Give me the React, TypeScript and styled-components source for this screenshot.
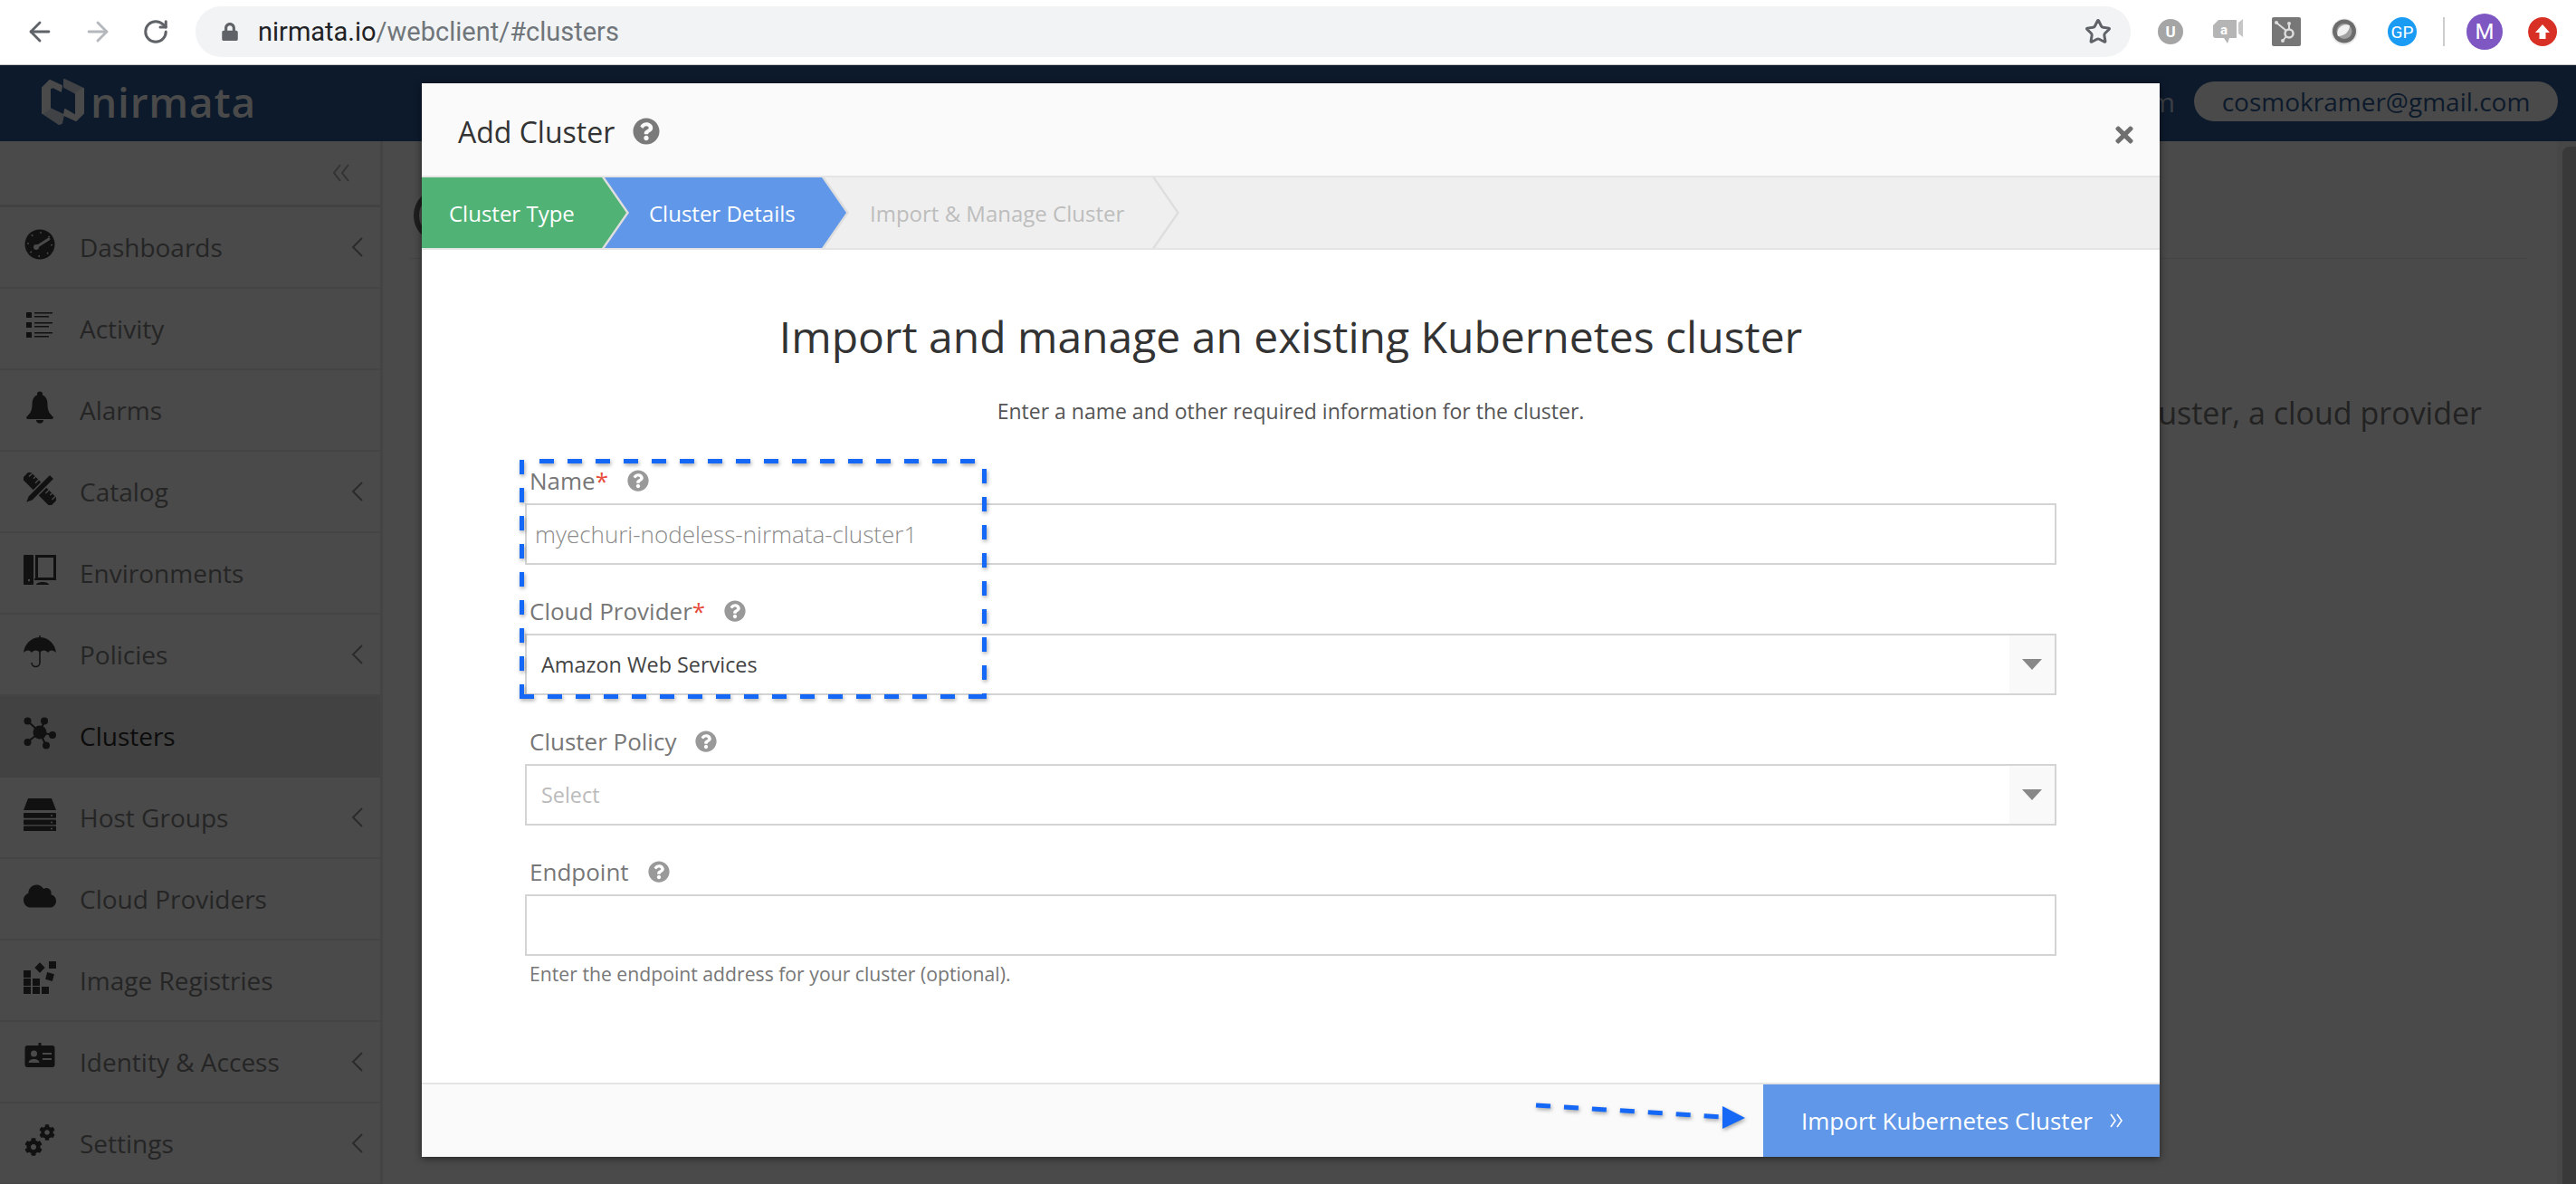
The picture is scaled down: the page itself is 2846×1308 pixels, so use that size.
import React from "react";
import styled, { createGlobalStyle } from "styled-components";
import { ArrowLeft, ArrowRight, RotateCw, Star } from "lucide-react";
import { FaCloud, FaCog, FaLock, FaQuestionCircle, FaTimes } from "react-icons/fa";

const GlobalStyle = createGlobalStyle`
  html, body { margin: 0; padding: 0; background: #4a4a4a; }
  * { box-sizing: border-box; }
`;

const INK = "#111111";
const DIM = "#4a4a4a";

const GaugeIcon = () => (
  <svg width="36" height="36" viewBox="0 0 36 36">
    <circle cx="18" cy="18" r="16.5" fill={INK} />
    <circle cx="18" cy="18" r="13" fill="none" stroke={DIM} strokeWidth="2" strokeDasharray="1.5 8.7" />
    <path d="M14 21 L28 12" stroke={DIM} strokeWidth="3" strokeLinecap="round" />
    <circle cx="14" cy="21" r="3" fill={DIM} />
  </svg>
);

const ListIcon = () => (
  <svg width="36" height="36" viewBox="0 0 36 36">
    {[3, 14, 25].map((y) => (
      <g key={y}>
        <rect x="3" y={y} width="6" height="6" fill={INK} />
        <rect x="12" y={y} width="20" height="1.5" fill={INK} />
        <rect x="12" y={y + 4} width="16" height="1.5" fill={INK} />
      </g>
    ))}
  </svg>
);

const BellIcon = () => (
  <svg width="36" height="36" viewBox="0 0 36 36" fill={INK}>
    <circle cx="18" cy="3.500" r="3" />
    <path d="M18 4 C11 4 9.500 10 9.500 15 C9.500 22 7 25 3 29 C3 30 4 31 5 31 H31 C32 31 33 30 33 29 C29 25 26.500 22 26.500 15 C26.500 10 25 4 18 4Z" />
    <path d="M14 32 H22 C22 37 14 37 14 32Z" />
  </svg>
);

const RulerPencilIcon = () => (
  <svg width="36" height="36" viewBox="0 0 36 36">
    <g transform="rotate(-45 18 18)">
      <rect x="12" y="-4" width="12" height="44" fill={INK} />
      <path d="M24 0 H19 M24 5 H21 M24 10 H19 M24 26 H19 M24 31 H21 M24 36 H19" stroke={DIM} strokeWidth="1.400" />
    </g>
    <path d="M29 2 L34 7 L10 31 L2 34 L5 26Z" fill={INK} stroke={DIM} strokeWidth="1.500" />
  </svg>
);

const DesktopIcon = () => (
  <svg width="36" height="36" viewBox="0 0 36 36">
    <rect x="0" y="1" width="11" height="33" rx="1" fill={INK} />
    <circle cx="6" cy="29" r="1.2" fill={DIM} />
    <rect x="14.5" y="2.5" width="20" height="25" fill="none" stroke={INK} strokeWidth="3" />
    <path d="M12 27 H36 V29 H12Z M14 34 C14 30 28 30 28 34Z" fill={INK} />
  </svg>
);

const UmbrellaIcon = () => (
  <svg width="36" height="36" viewBox="0 0 36 36">
    <path d="M17.3 0 H18.7 V2 C28 2.500 35 10 36 19 C33 15.500 29 15.500 27 19 C25 15.500 20 15.500 18 19 C16 15.500 11 15.500 9 19 C7 15.500 3 15.500 0 19 C1 10 8 2.500 17.300 2Z" fill={INK} />
    <path d="M18 18 V30 A4.500 4.500 0 0 1 9 30" fill="none" stroke={INK} strokeWidth="1.500" />
  </svg>
);

const ClusterIcon = () => (
  <svg width="36" height="36" viewBox="0 0 36 36">
    <path d="M18 17 L4 4 M18 17 L23 5 M18 17 L32 20 M18 17 L25 32 M18 17 L4 28" stroke={INK} strokeWidth="2" />
    <circle cx="18" cy="17" r="7.500" fill={INK} />
    <circle cx="4.500" cy="4.500" r="4" fill={INK} />
    <circle cx="23" cy="4.500" r="4" fill={INK} />
    <circle cx="32" cy="20" r="4" fill={INK} />
    <circle cx="25" cy="31.500" r="4" fill={INK} />
    <circle cx="4.500" cy="28" r="4" fill={INK} />
  </svg>
);

const ServerIcon = () => (
  <svg width="36" height="36" viewBox="0 0 36 36">
    <path d="M5 0 H31 L36 13 H0Z" fill={INK} />
    {[16, 23.500, 30.500].map((y) => (
      <g key={y}>
        <rect x="0" y={y} width="36" height="5.800" rx="1" fill={INK} />
        <circle cx="31" cy={y + 2.900} r="1" fill={DIM} />
      </g>
    ))}
  </svg>
);

const BlocksIcon = () => (
  <svg width="36" height="36" viewBox="0 0 36 36" fill={INK}>
    <rect x="0" y="28" width="8" height="8" />
    <rect x="10" y="28" width="8" height="8" />
    <rect x="20" y="28" width="8" height="8" />
    <rect x="0" y="19" width="8" height="8" />
    <rect x="10" y="19" width="8" height="8" />
    <rect x="0" y="10" width="8" height="8" />
    <rect x="14" y="3" width="8" height="8" transform="rotate(45 18 7)" />
    <rect x="25" y="13" width="8" height="8" transform="rotate(15 29 17)" />
    <rect x="28" y="0" width="8" height="8" />
  </svg>
);

const IdCardIcon = () => (
  <svg width="36" height="36" viewBox="0 0 36 36">
    <rect x="1.500" y="3" width="33" height="24" rx="3" fill={INK} />
    <rect x="16.500" y="0" width="3" height="4" fill={INK} />
    <circle cx="11.500" cy="12" r="3.500" fill={DIM} />
    <path d="M5.500 22 C6 16.500 17 16.500 17.500 22Z" fill={DIM} />
    <rect x="21" y="11" width="10" height="2" fill={DIM} />
    <rect x="21" y="17" width="10" height="2" fill={DIM} />
  </svg>
);

const GearsIcon = () => (
  <svg width="36" height="36" viewBox="0 0 36 36" color={INK}>
    <FaCog x="1" y="15" size={20} />
    <FaCog x="17" y="0" size={18} />
  </svg>
);

const BrandMark = () => (
  <svg width="47" height="51" viewBox="0 0 47 51" fill={DIM} stroke={DIM} strokeWidth="2" strokeLinejoin="round">
    <path d="M1 10 L9 2 L22 8 L21 14 L9 9 V33 L1 38Z" />
    <path d="M1 38 L9 33 L24 40 L22 49 L19 50Z" opacity="0.85" />
    <path d="M12 10 L22 15 L22 36 L12 31Z" fill="#0d1a2c" stroke="none" />
    <path d="M25 1 L46 11 L38 16 L25 9Z" opacity="0.85" />
    <path d="M38 16 L46 11 V38 L38 46 L25 40 L26 34 L38 41Z" />
  </svg>
);

const Page = styled.div`
  position: relative;
  width: 2846px;
  height: 1308px;
  overflow: hidden;
  background: #4a4a4a;
  font-family: "Open Sans", "Noto Sans", sans-serif;
`;

const Toolbar = styled.div`
  display: flex;
  align-items: center;
  height: 72px;
  padding: 0 0 1px 12px;
  background: #fff;
  border-bottom: 1px solid #c8c8c8;
`;

const NavButton = styled.div<{ $color: string }>`
  display: flex;
  align-items: center;
  justify-content: center;
  width: 64px;
  color: ${(p) => p.$color};
`;

const Omnibox = styled.div`
  display: flex;
  align-items: center;
  width: 2138px;
  height: 56px;
  margin: 0 12px;
  padding: 0 21px 0 28px;
  border-radius: 28px;
  background: #f1f3f4;
  color: #5f6368;
`;

const Url = styled.div`
  flex: 1;
  margin-left: 21px;
  font-family: Roboto, sans-serif;
  font-size: 29px;
  color: #70757a;
  span {
    color: #202124;
  }
`;

const ExtensionSlot = styled.div`
  display: flex;
  align-items: center;
  justify-content: center;
  width: 64px;
`;

const ToolbarDivider = styled.div`
  width: 2px;
  height: 32px;
  margin: 0 12px 0 13px;
  background: #ccc;
`;

const RoundBadge = styled.div<{ $size: number; $bg: string; $weight?: number }>`
  display: flex;
  align-items: center;
  justify-content: center;
  width: ${(p) => p.$size}px;
  height: ${(p) => p.$size}px;
  border-radius: 50%;
  background: ${(p) => p.$bg};
  color: #fff;
  font-family: Roboto, sans-serif;
  font-size: ${(p) => Math.round(p.$size * 0.6)}px;
  font-weight: ${(p) => p.$weight ?? 400};
`;

const TopNav = styled.div`
  display: flex;
  align-items: center;
  justify-content: space-between;
  height: 84px;
  padding: 0 20px 4px 46px;
  background: #0d1a2c;
`;

const Brand = styled.div`
  display: flex;
  align-items: center;
  gap: 7px;
  color: ${DIM};
  font-family: "Open Sans", sans-serif;
  font-size: 46px;
  font-weight: 600;
  letter-spacing: 0.8px;
  line-height: 50px;
`;

const AccountArea = styled.div`
  display: flex;
  align-items: center;
  gap: 21px;
  color: #3c3f45;
  font-size: 30px;
`;

const AccountPill = styled.div`
  display: flex;
  align-items: center;
  justify-content: center;
  width: 402px;
  height: 44px;
  border-radius: 22px;
  background: ${DIM};
  color: #0d1a2c;
  font-size: 28px;
`;

const Workspace = styled.div`
  display: flex;
  height: 1152px;
`;

const Sidebar = styled.div`
  flex: none;
  width: 423px;
  border-right: 3px solid #444;
`;

const CollapseRow = styled.div`
  display: flex;
  align-items: center;
  justify-content: flex-end;
  height: 73px;
  padding-right: 33px;
  border-bottom: 3px solid #424242;
  color: #333;
`;

const MenuRow = styled.div<{ $active?: boolean }>`
  display: flex;
  align-items: center;
  height: 90px;
  padding: 0 18px 0 26px;
  background: ${(p) => (p.$active ? "#424242" : "transparent")};
  border-bottom: 2px solid ${(p) => (p.$active ? "#424242" : "#444")};
  color: ${(p) => (p.$active ? "#0c0c0c" : "#252525")};
  font-size: 28px;
`;

const MenuIcon = styled.span`
  display: flex;
  align-items: center;
  justify-content: center;
  flex: none;
  width: 36px;
  height: 36px;
  margin: -6px 26px 0 0;
  color: ${INK};
`;

const MenuLabel = styled.span`
  flex: 1;
`;

const Content = styled.div`
  flex: 1;
  padding: 52px 33px 0 30px;
`;

const ContentHead = styled.div`
  height: 78px;
  border-bottom: 1px solid #444;
`;

const ContentBadge = styled.div`
  width: 60px;
  height: 60px;
  margin-left: 4px;
  border: 6px solid #1e1e1e;
  border-radius: 50%;
`;

const BackgroundCopy = styled.div`
  margin-top: 147px;
  padding-right: 50px;
  color: #222;
  font-size: 34px;
  line-height: 46px;
  text-align: right;
  white-space: nowrap;
`;

const ScrollTrack = styled.div`
  flex: none;
  width: 21px;
  padding: 6px 0 0 6px;
  background: #474747;
`;

const ScrollThumb = styled.div`
  height: 100%;
  border-radius: 8px 0 0 0;
  background: #393939;
`;

const Modal = styled.div`
  position: absolute;
  top: 92px;
  left: 466px;
  display: flex;
  flex-direction: column;
  width: 1920px;
  height: 1186px;
  border-radius: 3px 3px 0 0;
  background: #fff;
  box-shadow: 0 2px 8px rgba(0, 0, 0, 0.5);
`;

const ModalHeader = styled.div`
  display: flex;
  align-items: center;
  flex: none;
  height: 104px;
  padding: 4px 25px 0 40px;
  background: #fafafa;
  border-bottom: 2px solid #e4e4e4;
  color: #7a7a7a;
`;

const ModalTitle = styled.div`
  margin-right: 20px;
  color: #333;
  font-size: 32px;
`;

const CloseButton = styled.div`
  display: flex;
  margin: 8px 0 0 auto;
  color: #6f6f6f;
`;

const StepStrip = styled.div`
  display: flex;
  flex: none;
  height: 80px;
  background: #efefef;
  border-bottom: 2px solid #e4e4e4;
`;

const CHEVRON = "polygon(0 0, calc(100% - 27px) 0, 100% 50%, calc(100% - 27px) 100%, 0 100%)";

const Step = styled.div<{ $width: number; $overlap: number; $z: number }>`
  position: relative;
  z-index: ${(p) => p.$z};
  flex: none;
  width: ${(p) => p.$width}px;
  margin-left: ${(p) => -p.$overlap}px;
  background: #dedede;
  clip-path: ${CHEVRON};
`;

const StepFill = styled.div<{ $bg: string; $color: string; $pad: number }>`
  display: flex;
  align-items: center;
  height: 100%;
  margin-right: 3px;
  padding-left: ${(p) => p.$pad}px;
  background: ${(p) => p.$bg};
  color: ${(p) => p.$color};
  clip-path: ${CHEVRON};
  font-size: 24px;
`;

const ModalBody = styled.div`
  flex: 1;
  padding: 62px 114px 0;
`;

const Heading = styled.h1`
  margin: 0;
  color: #333;
  font-size: 48px;
  font-weight: 400;
  line-height: 68px;
  text-align: center;
`;

const Intro = styled.p`
  margin: 30px 0 41px;
  color: #555;
  font-size: 23px;
  line-height: 36px;
  text-align: center;
`;

const Form = styled.div`
  display: flex;
  flex-direction: column;
  gap: 33px;
`;

const FieldLabel = styled.div`
  display: flex;
  align-items: center;
  height: 36px;
  margin-bottom: 7px;
  padding-left: 5px;
  color: #777;
  font-size: 26px;
  svg {
    margin-left: 21px;
    color: #999;
  }
`;

const Required = styled.span`
  color: #e74c3c;
`;

const TextBox = styled.div`
  display: flex;
  align-items: center;
  height: 68px;
  padding-left: 9px;
  border: 2px solid #d4d4d4;
  color: #8a8a8a;
  font-size: 26px;
  font-weight: 300;
`;

const SelectBox = styled.div`
  display: flex;
  align-items: stretch;
  height: 68px;
  border: 2px solid #d4d4d4;
`;

const SelectValue = styled.div<{ $placeholder?: boolean }>`
  display: flex;
  align-items: center;
  flex: 1;
  padding-left: 16px;
  color: ${(p) => (p.$placeholder ? "#bbb" : "#444")};
  font-size: 23.4px;
`;

const SelectCaret = styled.div`
  display: flex;
  align-items: center;
  justify-content: center;
  width: 50px;
  background: #f9f9f9;
  &::after {
    content: "";
    border-top: 12px solid #888;
    border-left: 11px solid transparent;
    border-right: 11px solid transparent;
  }
`;

const Hint = styled.div`
  margin-top: 5px;
  padding-left: 5px;
  color: #777;
  font-size: 21.2px;
  line-height: 30px;
`;

const ModalFooter = styled.div`
  display: flex;
  justify-content: flex-end;
  flex: none;
  height: 82px;
  background: #fafafa;
  border-top: 2px solid #e4e4e4;
`;

const SubmitButton = styled.div`
  display: flex;
  align-items: center;
  gap: 18px;
  width: 438px;
  padding-left: 42px;
  background: #6097e8;
  color: #fff;
  font-size: 26px;
`;

const Annotation = styled.svg`
  position: absolute;
  top: 0;
  left: 0;
  pointer-events: none;
  filter: drop-shadow(1px 2px 2px rgba(0, 0, 0, 0.35));
`;

type MenuEntry = { label: string; icon: React.ReactNode; sub?: boolean; active?: boolean };

const MENU: MenuEntry[] = [
  { label: "Dashboards", icon: <GaugeIcon />, sub: true },
  { label: "Activity", icon: <ListIcon /> },
  { label: "Alarms", icon: <BellIcon /> },
  { label: "Catalog", icon: <RulerPencilIcon />, sub: true },
  { label: "Environments", icon: <DesktopIcon /> },
  { label: "Policies", icon: <UmbrellaIcon />, sub: true },
  { label: "Clusters", icon: <ClusterIcon />, active: true },
  { label: "Host Groups", icon: <ServerIcon />, sub: true },
  { label: "Cloud Providers", icon: <FaCloud size={36} /> },
  { label: "Image Registries", icon: <BlocksIcon /> },
  { label: "Identity & Access", icon: <IdCardIcon />, sub: true },
  { label: "Settings", icon: <GearsIcon />, sub: true },
];

const HELP_SIZE = 24;

export default function App() {
  return (
    <Page>
      <GlobalStyle />
      <Toolbar>
        <NavButton $color="#5f6368"><ArrowLeft size={34} strokeWidth={2} /></NavButton>
        <NavButton $color="#b4b7bb"><ArrowRight size={34} strokeWidth={2} /></NavButton>
        <NavButton $color="#5f6368"><RotateCw size={30} strokeWidth={2.4} /></NavButton>
        <Omnibox>
          <FaLock size={20} />
          <Url><span>nirmata.io</span>/webclient/#clusters</Url>
          <Star size={30} strokeWidth={2.4} />
        </Omnibox>
        <ExtensionSlot>
          <RoundBadge $size={28} $bg="#a5a5a5" $weight={700}>U</RoundBadge>
        </ExtensionSlot>
        <ExtensionSlot>
          <svg width="34" height="30" viewBox="0 0 34 30">
            <path d="M6 2 H26 V22 H18 L16 28 L12 22 H3 A3 3 0 0 1 0 19 V8Z" fill="#b5b5b5" />
            <path d="M28 5 L33 1 V21 L28 17Z" fill="#c6c6c6" />
            <text x="8" y="18" fill="#fff" fontFamily="Roboto, sans-serif" fontSize="15" fontWeight="700">a</text>
          </svg>
        </ExtensionSlot>
        <ExtensionSlot>
          <svg width="32" height="32" viewBox="0 0 32 32">
            <rect width="32" height="32" rx="2" fill="#777" />
            <circle cx="19" cy="18" r="4.500" fill="none" stroke="#ddd" strokeWidth="2.500" />
            <path d="M5 6 L16 15 M19 7 V13 M16 21 L12 26" stroke="#ddd" strokeWidth="2" />
            <circle cx="5" cy="6" r="2" fill="#ddd" />
            <circle cx="19" cy="7" r="2" fill="#ddd" />
            <circle cx="12" cy="26" r="2" fill="#ddd" />
          </svg>
        </ExtensionSlot>
        <ExtensionSlot>
          <svg width="30" height="30" viewBox="0 0 30 30">
            <circle cx="15" cy="15" r="14.500" fill="#e8e8e8" />
            <circle cx="15" cy="14.500" r="13" fill="#6c6c6c" />
            <circle cx="15" cy="14.500" r="8.500" fill="#a0a0a0" />
            <path d="M21 8 C21 15 15 20 8 20 C5 13 12 5 21 8Z" fill="#f0f0f0" />
          </svg>
        </ExtensionSlot>
        <ExtensionSlot>
          <RoundBadge $size={32} $bg="#1a9cf5">GP</RoundBadge>
        </ExtensionSlot>
        <ToolbarDivider />
        <ExtensionSlot>
          <RoundBadge $size={40} $bg="#7e57c2">M</RoundBadge>
        </ExtensionSlot>
        <ExtensionSlot>
          <RoundBadge $size={32} $bg="#d93025">
            <svg width="18" height="18" viewBox="0 0 18 18">
              <path d="M9 1 L17 10 H12.500 V17 H5.500 V10 H1Z" fill="#fff" />
            </svg>
          </RoundBadge>
        </ExtensionSlot>
      </Toolbar>

      <TopNav>
        <Brand>
          <BrandMark />
          nirmata
        </Brand>
        <AccountArea>
          m
          <AccountPill>cosmokramer@gmail.com</AccountPill>
        </AccountArea>
      </TopNav>

      <Workspace>
        <Sidebar>
          <CollapseRow>
            <svg width="20" height="20" viewBox="0 0 20 20" fill="none" stroke="currentColor" strokeWidth="2">
              <path d="M9 1 L2 10 L9 19 M18 1 L11 10 L18 19" />
            </svg>
          </CollapseRow>
          {MENU.map((item) => (
            <MenuRow key={item.label} $active={item.active}>
              <MenuIcon>{item.icon}</MenuIcon>
              <MenuLabel>{item.label}</MenuLabel>
              {item.sub && (
                <svg width="14" height="22" viewBox="0 0 14 22" fill="none" stroke="#2a2a2a" strokeWidth="1.800">
                  <path d="M12 1 L2 11 L12 21" />
                </svg>
              )}
            </MenuRow>
          ))}
        </Sidebar>
        <Content>
          <ContentHead>
            <ContentBadge />
          </ContentHead>
          <BackgroundCopy>cluster, a cloud provider</BackgroundCopy>
        </Content>
        <ScrollTrack>
          <ScrollThumb />
        </ScrollTrack>
      </Workspace>

      <Modal>
        <ModalHeader>
          <ModalTitle>Add Cluster</ModalTitle>
          <FaQuestionCircle size={30} />
          <CloseButton><FaTimes size={28} /></CloseButton>
        </ModalHeader>
        <StepStrip>
          <Step $width={229} $overlap={0} $z={3}>
            <StepFill $bg="#50b275" $color="#fff" $pad={30}>Cluster Type</StepFill>
          </Step>
          <Step $width={273} $overlap={30} $z={2}>
            <StepFill $bg="#6097e8" $color="#fff" $pad={52}>Cluster Details</StepFill>
          </Step>
          <Step $width={394} $overlap={29} $z={1}>
            <StepFill $bg="#efefef" $color="#bdbdbd" $pad={52}>Import &amp; Manage Cluster</StepFill>
          </Step>
        </StepStrip>
        <ModalBody>
          <Heading>Import and manage an existing Kubernetes cluster</Heading>
          <Intro>Enter a name and other required information for the cluster.</Intro>
          <Form>
            <div>
              <FieldLabel>Name<Required>*</Required><FaQuestionCircle size={HELP_SIZE} /></FieldLabel>
              <TextBox>myechuri-nodeless-nirmata-cluster1</TextBox>
            </div>
            <div>
              <FieldLabel>Cloud Provider<Required>*</Required><FaQuestionCircle size={HELP_SIZE} /></FieldLabel>
              <SelectBox>
                <SelectValue>Amazon Web Services</SelectValue>
                <SelectCaret />
              </SelectBox>
            </div>
            <div>
              <FieldLabel>Cluster Policy<FaQuestionCircle size={HELP_SIZE} /></FieldLabel>
              <SelectBox>
                <SelectValue $placeholder>Select</SelectValue>
                <SelectCaret />
              </SelectBox>
            </div>
            <div>
              <FieldLabel>Endpoint<FaQuestionCircle size={HELP_SIZE} /></FieldLabel>
              <TextBox />
              <Hint>Enter the endpoint address for your cluster (optional).</Hint>
            </div>
          </Form>
        </ModalBody>
        <ModalFooter>
          <SubmitButton>
            Import Kubernetes Cluster
            <svg width="16" height="18" viewBox="0 0 16 18" fill="none" stroke="#fff" strokeWidth="1.600">
              <path d="M2 2 L7 9 L2 16 M9 2 L14 9 L9 16" />
            </svg>
          </SubmitButton>
        </ModalFooter>
      </Modal>

      <Annotation width="2846" height="1308" viewBox="0 0 2846 1308" fill="none">
        <g stroke="#1468f5" strokeWidth="5" strokeDasharray="16 15">
          <path d="M596 509.500 H1084" />
          <path d="M1087.500 518 V772" />
          <path d="M574 769.500 H1090" />
          <path d="M576.500 772 V507" />
        </g>
        <path d="M1697 1221 L1904 1234" stroke="#1468f5" strokeWidth="5" strokeDasharray="16 15" />
        <path d="M1903 1222 L1928 1235 L1903 1247Z" fill="#1468f5" />
      </Annotation>
    </Page>
  );
}
